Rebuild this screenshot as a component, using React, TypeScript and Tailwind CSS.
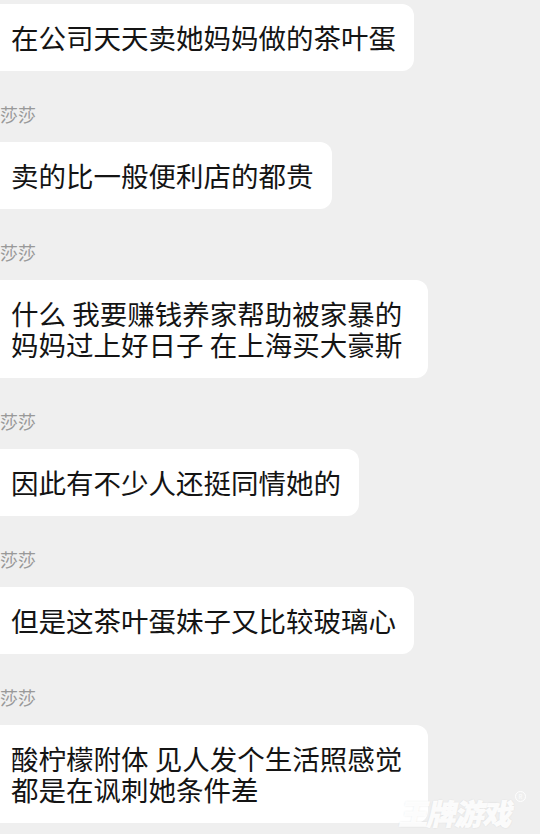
const MESSAGES: string[][] = [
  ["在公司天天卖她妈妈做的茶叶蛋"],
  ["卖的比一般便利店的都贵"],
  ["什么 我要赚钱养家帮助被家暴的", "妈妈过上好日子 在上海买大豪斯"],
  ["因此有不少人还挺同情她的"],
  ["但是这茶叶蛋妹子又比较玻璃心"],
  ["酸柠檬附体 见人发个生活照感觉", "都是在讽刺她条件差"],
];

function Bubble({ lines }: { lines: string[] }) {
  const multi = lines.length > 1;
  return (
    <div
      className={`ml-[-12px] rounded-[12px] bg-white py-[18px] pl-[23px] pr-[18px] text-[27.5px] leading-[31px] text-[#141414] ${
        multi ? "w-[440px]" : "w-fit"
      }`}
    >
      {lines.map((line) => (
        <div key={line} className="whitespace-nowrap">
          {line}
        </div>
      ))}
    </div>
  );
}

function SenderName() {
  return (
    <div className="mt-[32px] mb-[17px] h-[22px] text-[18px] leading-[22px] text-[#999999]">
      莎莎
    </div>
  );
}

export default function App() {
  return (
    <div
      className="relative h-[834px] w-[540px] overflow-hidden bg-[#efefef] pt-[4px]"
      style={{ fontFamily: '"Noto Sans CJK SC", "Noto Sans", sans-serif' }}
    >
      {MESSAGES.map((lines, i) => (
        <div key={i}>
          <Bubble lines={lines} />
          {i < MESSAGES.length - 1 && <SenderName />}
        </div>
      ))}

      {/* watermark */}
      <div className="absolute right-[14px] bottom-[6px] flex items-start">
        <span className="skew-x-[-12deg] text-[29px] font-black leading-[32px] tracking-[-1px] text-white/90 [-webkit-text-stroke:0.6px_rgba(255,255,255,0.9)] [text-shadow:0_0_2px_rgba(0,0,0,0.12)]">
          王牌游戏
        </span>
        <span className="mt-[-5px] ml-[2px] flex h-[11px] w-[11px] items-center justify-center rounded-full border border-white/90 text-[6px] leading-none text-white/90">
          R
        </span>
      </div>
    </div>
  );
}
